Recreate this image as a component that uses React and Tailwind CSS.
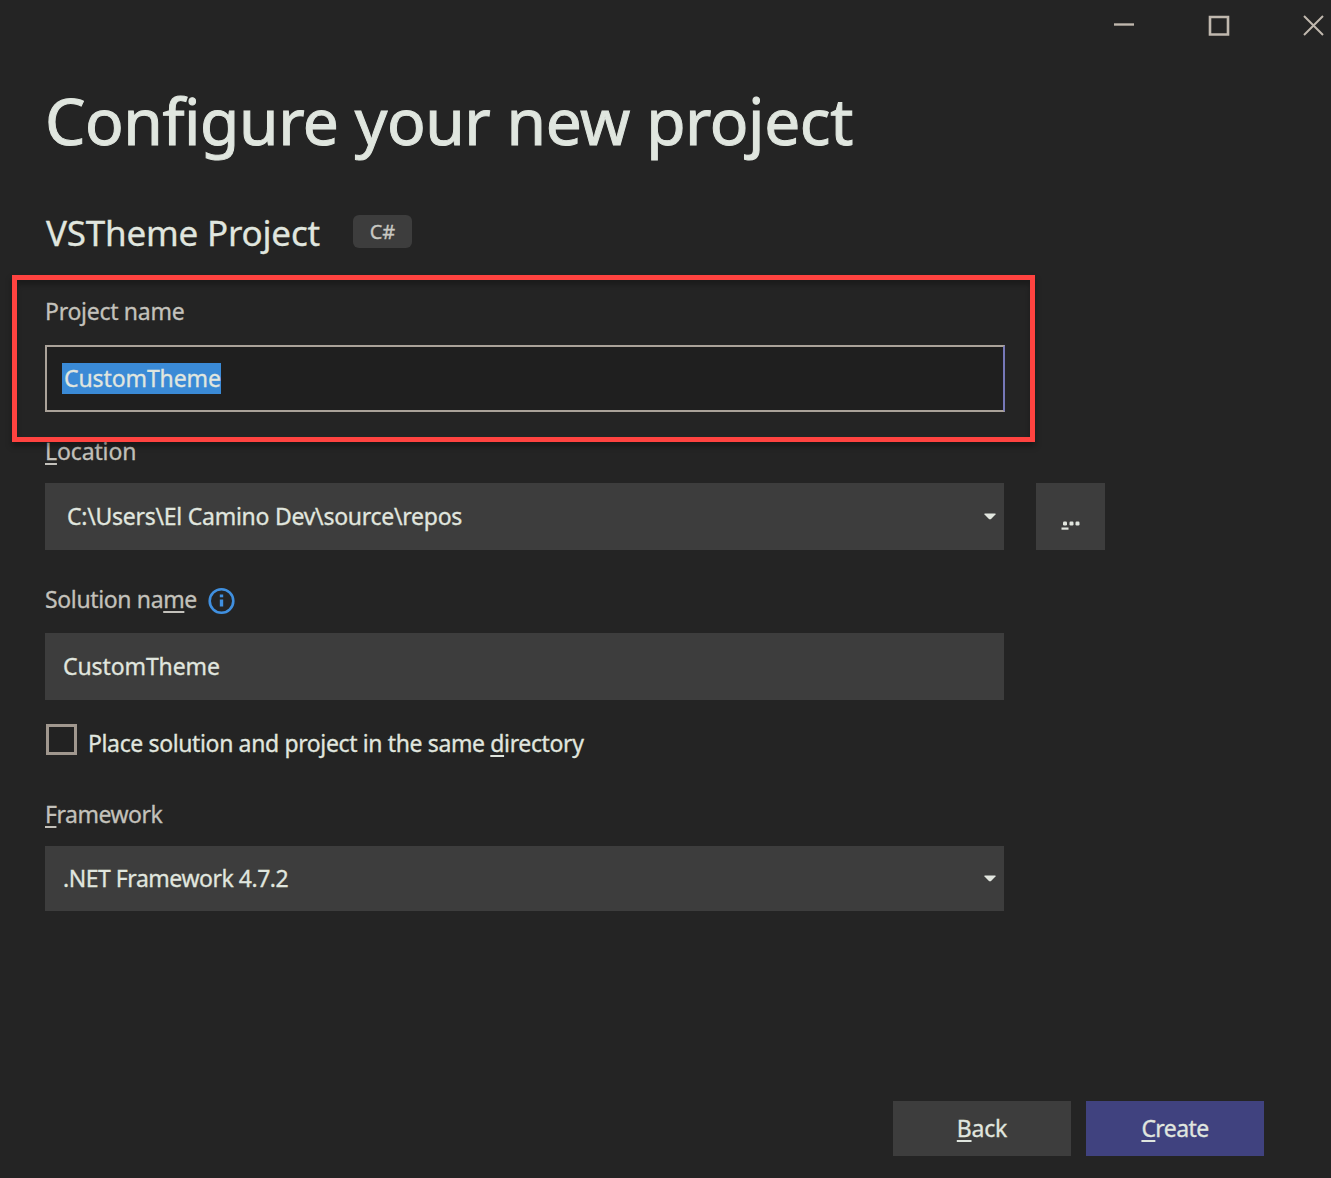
function Key({ children }) {
  return (
    <span className="underline decoration-2 underline-offset-[3px] [text-decoration-skip-ink:none]">
      {children}
    </span>
  );
}

function Label({ className, children }) {
  return (
    <div className={"flex h-8 items-center whitespace-pre pt-[2px] leading-8 text-[#c3c1bb] " + className}>{children}</div>
  );
}

function Caret() {
  return (
    <svg width="12" height="7" viewBox="0 0 12 7" className="mr-2">
      <path d="M.5 .5h11v1L6.8 6.2H5.2L.5 1.5z" fill="#e2e6df" />
    </svg>
  );
}

function WindowControls() {
  return (
    <div className="flex h-[77px] items-start justify-end pr-[6px] pt-[14px]">
      <svg width="212" height="24" viewBox="0 0 212 24" fill="none" stroke="#c0b8ae" strokeWidth="2">
        <path d="M1 10.5h20" strokeWidth="2.4" />
        <path d="M97 3h18v17.5h-18z" strokeWidth="2.6" />
        <path d="M191 2l19 19M210 2l-19 19" />
      </svg>
    </div>
  );
}

export default function App() {
  return (
    <main className="flex h-[1178px] w-[1331px] flex-col overflow-hidden bg-[#242424] font-['Noto_Sans',sans-serif] text-[23px] text-[#e0e6df] [-webkit-text-stroke:0.3px]">
      <WindowControls />

      <h1 className="ml-[45px] h-[88px] whitespace-nowrap text-[64px] leading-[88px] tracking-[-0.43px] [-webkit-text-stroke:1px]">
        Configure your new project
      </h1>

      <div className="ml-[46px] mt-[43px] flex h-12 items-start">
        <h2 className="w-[307px] whitespace-nowrap pt-px text-[35px] leading-[48px] tracking-[-0.2px]">
          VSTheme Project
        </h2>
        <span className="mt-[7px] flex h-[33px] w-[59px] items-center justify-center rounded-md bg-[#3d3d3d] text-[20px] text-[#c9c9c3]">
          C#
        </span>
      </div>

      <div className="ml-[45px] flex w-[959px] flex-col">
        <section className="relative mt-[38px] h-[118px]">
          <Label className="tracking-[-0.28px]">Project name</Label>
          <div className="mt-[19px] flex h-[67px] w-[960px] items-center border-2 border-[#aaa299] border-r-[#7678b8] bg-[#1f1f1f] pl-[15px]">
            <span className="flex h-[31px] w-[159px] items-center whitespace-nowrap bg-[#3a8ad6] pl-[2px] tracking-[-0.1px]">
              CustomTheme
            </span>
          </div>
          <div className="pointer-events-none absolute -left-[33px] -top-[19px] z-10 h-[167px] w-[1023px] border-[5px] border-[#ff4340] shadow-[0_4px_6px_rgba(0,0,0,0.35),inset_0_5px_5px_rgba(0,0,0,0.25)]" />
        </section>

        <section className="mt-[22px]">
          <Label className="tracking-[-0.12px]">
            <Key>L</Key>ocation
          </Label>
          <div className="mt-[17px] flex w-[1060px] gap-8">
            <div className="flex h-[67px] w-[959px] shrink-0 items-center justify-between bg-[#3d3d3d] pl-[22px] tracking-[-0.26px]">
              C:\Users\El Camino Dev\source\repos
              <Caret />
            </div>
            <button className="flex h-[67px] w-[69px] shrink-0 items-center justify-center bg-[#3d3d3d]">
              <svg width="20" height="12" viewBox="0 0 20 12" className="mt-[17px]" fill="#e2e6df">
                <rect x="2" y="2.5" width="4" height="4" rx="1.2" />
                <rect x="8.5" y="2.5" width="4" height="4" rx="1.2" />
                <rect x="14.5" y="2.5" width="4" height="4" rx="1.2" />
                <rect x="0.5" y="8.5" width="7" height="2.2" />
              </svg>
            </button>
          </div>
        </section>

        <section className="mt-8">
          <Label className="tracking-[-0.36px]">
            Solution na<Key>m</Key>e
            <svg width="28" height="28" viewBox="0 0 28 28" className="ml-[10px] mt-[3px]" fill="none" stroke="#4090e0">
              <circle cx="14.5" cy="14" r="11.8" strokeWidth="2.6" />
              <path d="M14.5 12.5v7" strokeWidth="3.4" />
              <path d="M14.5 7.5v2.8" strokeWidth="3.4" />
            </svg>
          </Label>
          <div className="mt-[19px] flex h-[67px] items-center bg-[#3d3d3d] pl-[18px] tracking-[-0.1px]">CustomTheme</div>
        </section>

        <div className="ml-px mt-6 flex h-8 items-start">
          <span className="h-[31px] w-[31px] border-[3px] border-[#a0978e] bg-[#222]" />
          <span className="ml-[11px] mt-[3px] whitespace-nowrap leading-8 tracking-[-0.37px]">
            Place solution and project in the same <Key>d</Key>irectory
          </span>
        </div>

        <section className="mt-[41px]">
          <Label className="tracking-[-0.5px]">
            <Key>F</Key>ramework
          </Label>
          <div className="mt-[17px] flex h-[65px] items-center justify-between bg-[#3d3d3d] pl-[18px] tracking-[-0.47px]">
            .NET Framework 4.7.2
            <Caret />
          </div>
        </section>
      </div>

      <footer className="mb-[22px] mr-[67px] mt-auto flex justify-end gap-[15px]">
        <button className="h-[55px] w-[178px] bg-[#3d3d3d] tracking-[-0.2px]">
          <Key>B</Key>ack
        </button>
        <button className="h-[55px] w-[178px] bg-[#40427f] tracking-[-0.6px]">
          <Key>C</Key>reate
        </button>
      </footer>
    </main>
  );
}
